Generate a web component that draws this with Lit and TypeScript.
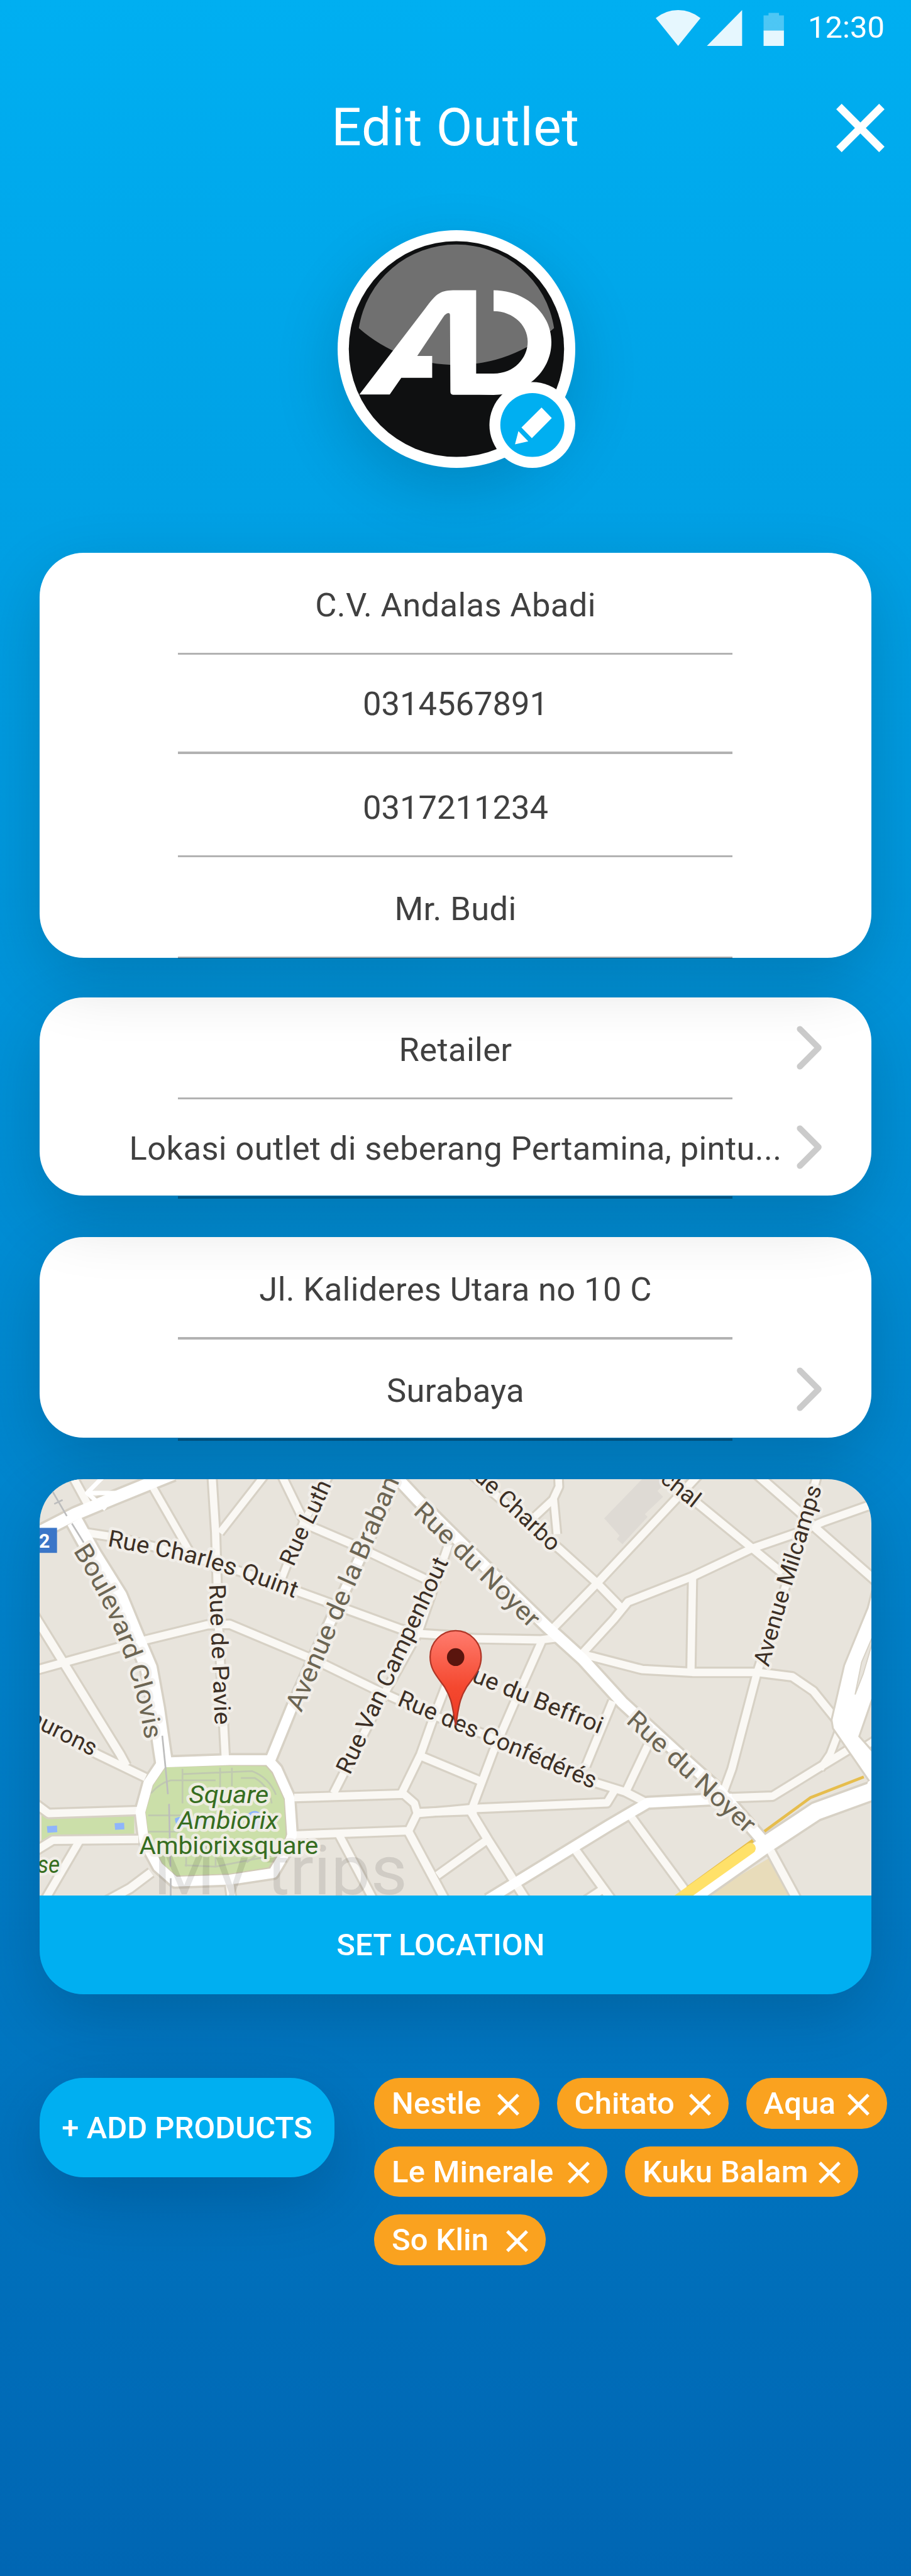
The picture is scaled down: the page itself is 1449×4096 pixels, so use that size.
import { LitElement, html, svg, css, unsafeCSS } from "lit";
import { customElement, property } from "lit/decorators.js";

/* Design units are 0.875 of a CSS pixel. */
const K = 0.875;
const u = (n: number) => unsafeCSS(`${+(n * K).toFixed(4)}px`);
const px = (n: number) => `${+(n * K).toFixed(4)}px`;

interface Field {
  text: string;
  height: number;
  top: number;
  more?: boolean;
  digits?: boolean;
}

const GROUPS: { name: string; fields: Field[] }[] = [
  {
    name: "contact",
    fields: [
      { text: "C.V. Andalas Abadi", height: 186, top: 59.5 },
      { text: "0314567891", height: 180, top: 53.5, digits: true },
      { text: "0317211234", height: 188, top: 61.5, digits: true },
      { text: "Mr. Budi", height: 184, top: 57.5 },
    ],
  },
  {
    name: "kind",
    fields: [
      { text: "Retailer", height: 186, top: 59.5, more: true },
      { text: "Lokasi outlet di seberang Pertamina, pintu...", height: 180, top: 53.5, more: true },
    ],
  },
  {
    name: "address",
    fields: [
      { text: "Jl. Kalideres Utara no 10 C", height: 186, top: 59 },
      { text: "Surabaya", height: 184, top: 57.5, more: true },
    ],
  },
];

const PRODUCTS = [
  [
    { name: "Nestle", width: 300, end: 36 },
    { name: "Chitato", width: 312, end: 32 },
    { name: "Aqua", width: 256, end: 32 },
  ],
  [
    { name: "Le Minerale", width: 424, end: 32 },
    { name: "Kuku Balam", width: 424, end: 32 },
  ],
  [{ name: "So Klin", width: 312, end: 32 }],
];

/* Streets: [path, width]. The eastern half of the map has its own origin. */
const EAST = 1529;
type Road = [string, number];

const MINOR_WEST: Road[] = [
  ["M178 40L245 160", 26],
  ["M215 238L330 255L600 320L860 400L1000 450L1350 575L1410 590L1580 600", 26],
  ["M677 40L690 240L700 560L725 1030", 26],
  ["M465 80L600 310", 24],
  ["M865 40L705 240", 24],
  ["M925 40L1010 210L1200 290L1440 402", 26],
  ["M1095 40L1000 210L925 400", 24],
  ["M1520 280L1410 590L1290 800L1110 1145", 26],
  ["M40 720L430 615L660 560L740 558L1050 685L1250 780L1340 820", 26],
  ["M40 520L350 1010L372 1050", 28],
  ["M40 890L270 1010L440 1090", 26],
  ["M40 1175L95 1215L415 1205", 26],
  ["M40 1350L110 1308L415 1305", 26],
  ["M205 1310L85 1510", 26],
  ["M300 1520L385 1475L460 1420", 28],
  ["M970 1160L1360 1148L1398 1180L1408 1215L1378 1275L970 1290", 26],
  ["M1408 1212L1620 1205", 26],
  ["M1515 760L1460 900L1420 1010L1350 1150", 26],
  ["M1420 1015L1530 1060L1640 1105", 26],
  ["M1130 1290L1255 1520", 26],
  ["M1375 1275L1510 1520", 28],
  ["M1480 1430L1530 1395L1655 1308", 26],
  ["M740 1460L748 1520", 28],
];

const MINOR_EAST: Road[] = [
  ["M-30 602L90 608L320 612L375 605", 26],
  ["M382 40L384 80L365 120L377 245", 24],
  ["M368 120L280 200", 24],
  ["M40 10L390 300L520 415L605 500", 26],
  ["M890 30L520 415L355 580", 26],
  ["M740 20L880 140L1070 292L1180 380", 26],
  ["M1080 30L1250 175L1300 225L1510 405", 28],
  ["M1510 138L1330 200L1240 238L1070 295L860 392L630 480L580 540L465 662L510 672L680 715L860 725L1090 725L1215 740L1290 790L1385 905", 26],
  ["M860 392L854 722", 26],
  ["M1310 20L1200 400L1090 725L1000 1060L970 1140", 26],
  ["M322 618L230 820L150 1000L75 1195", 26],
  ["M575 825L480 1050", 26],
  ["M700 980L622 1140", 26],
  ["M-190 820L0 900L120 940L520 1110L620 1140L700 1180", 26],
  ["M-120 1215L0 1205L75 1198L555 1178L582 1135", 26],
  ["M940 1162L1145 1155L1300 1062L1430 985", 26],
  ["M1385 920L1350 1010L1315 1060", 24],
  ["M640 1225L855 1510", 26],
  ["M445 1345L575 1520", 28],
  ["M68 1205L130 1305L270 1520", 28],
  ["M475 1520L545 1475", 26],
  ["M1138 1345L1235 1520", 28],
  ["M1430 1010L1510 960", 22],
];

const MAJOR_WEST: Road[] = [
  ["M30 255L190 175L330 118L540 35", 42],
  ["M187 200L255 320L345 460L400 590L452 710L478 850L500 1000L508 1050", 56],
  ["M1345 30L1170 400L1050 650L960 850L885 1030", 34],
  ["M500 1038L740 1030L878 1030L908 1062L953 1160L962 1290L945 1340L895 1422L740 1445L545 1452L485 1400L435 1310L422 1210L450 1110Z", 34],
];

const MAJOR_EAST: Road[] = [
  ["M-230 10L-120 125L30 270L340 565L470 680L610 830L800 1000L960 1140L1115 1315", 38],
  ["M1000 1163L700 1178L560 1258L130 1515", 34],
  ["M1520 1130L1300 1208L1110 1330L840 1515", 58],
];

interface Label {
  id: string;
  text: string;
  d: string;
  length: number;
  size: number;
  tone: string;
}

const LABELS: Label[] = [
  { id: "boulevard", text: "Boulevard Clovis", d: "M182 303Q302 490 365 668Q414 800 440 970", length: 710, size: 91, tone: "soft" },
  { id: "quint", text: "Rue Charles Quint", d: "M303 286Q440 312 560 335Q750 380 995 477", length: 694, size: 82, tone: "ink" },
  { id: "pavie", text: "Rue de Pavie", d: "M667 420L689 950", length: 488, size: 82, tone: "ink" },
  { id: "luth", text: "Rue Luth", d: "M968 360Q1010 260 1040 205Q1075 140 1130 10", length: 318, size: 82, tone: "ink" },
  { id: "braban", text: "Avenue de la Braban", d: "M995 866L1363 20", length: 880, size: 92, tone: "soft" },
  { id: "campenhout", text: "Rue Van Campenhout", d: "M1168 1084L1535 310", length: 822, size: 83, tone: "ink" },
  { id: "noyer-north", text: "Rue du Noyer", d: "M1391 171L1862 624", length: 582, size: 90, tone: "soft" },
  { id: "noyer-south", text: "Rue du Noyer", d: "M2149 898L2600 1307", length: 582, size: 90, tone: "soft" },
  { id: "charbo", text: "Rue Charbo", d: "M1570 15L1925 344", length: 432, size: 82, tone: "ink" },
  { id: "chal", text: "chal", d: "M2270 60L2420 180", length: 154, size: 82, tone: "ink" },
  { id: "milcamps", text: "Avenue Milcamps", d: "M2660 708Q2737 440 2757 380Q2802 240 2866 30", length: 652, size: 82, tone: "ink" },
  { id: "confederes", text: "Rue des Confédérés", d: "M1334 838L2080 1149", length: 758, size: 82, tone: "ink" },
  { id: "beffroi", text: "Rue du Beffroi", d: "M1550 736L2100 956", length: 546, size: 82, tone: "ink" },
  { id: "aurons", text: "aurons", d: "M20 902L290 1037", length: 258, size: 82, tone: "ink" },
];

const roads = (list: Road[], extra: number) =>
  list.map(([d, w]) => svg`<path d=${d} stroke-width=${w + extra} />`);

@customElement("area-map")
class AreaMap extends LitElement {
  static styles = css`
    :host { display: block; }
    .map { display: block; width: 100%; height: 100%; background: #e8e4dc; }
    .streets { fill: none; stroke-linejoin: round; }
    .edge { stroke: #d7d1c5; }
    .minor { stroke: #faf8f4; }
    .major { stroke: #fff; }
    .text { font-family: Roboto, "Liberation Sans", sans-serif; }
    .label {
      paint-order: stroke;
      stroke: rgba(243, 240, 235, 0.9);
      stroke-width: 20px;
      stroke-linejoin: round;
    }
    .ink { fill: #3c2f25; }
    .soft { fill: #6c6553; }
    .green { fill: #366d20; }
    .badge { fill: #fff; font-weight: 700; }
    .italic { font-style: italic; }
    .watermark { fill: rgba(0, 0, 0, 0.1); }
  `;

  render() {
    const east = `translate(${EAST} 0)`;
    return html`
      <svg class="map" viewBox="63 54 2963 1445" preserveAspectRatio="none">
        <defs>
          <linearGradient id="pin" x1="0" y1="0" x2="0" y2="1">
            <stop offset="0" stop-color="#ff7c6e" />
            <stop offset="0.6" stop-color="#f4482f" />
            <stop offset="1" stop-color="#ee3a24" />
          </linearGradient>
          ${LABELS.map((l) => svg`<path id=${l.id} d=${l.d} />`)}
        </defs>

        <path fill="#dedad4" d="M2209 54L2074 190L2129 250L2119 262L2139 280L2229 185L2219 175L2284 115L2264 95L2304 54Z" />
        <path fill="#e8dcba" d="M2659 1372L2439 1499L2734 1499Z" />
        <path fill="#cbdfa9" d="M70 1212L110 1232L400 1222L400 1290L120 1290L70 1310Z" />
        <g fill="#8fb5fb"><path d="M89 1259L125 1257L126 1280L91 1282Z" /><path d="M330 1249L364 1247L365 1270L332 1272Z" /></g>

        <g class="streets edge">
          ${roads(MINOR_WEST, 14)}${roads(MAJOR_WEST, 16)}
          <g transform=${east}>${roads(MINOR_EAST, 14)}${roads(MAJOR_EAST, 16)}</g>
        </g>
        <g class="streets minor">
          ${roads(MINOR_WEST, 0)}
          <g transform=${east}>${roads(MINOR_EAST, 0)}</g>
        </g>
        <path fill="#cbdfa9" stroke="#d0c9b6" stroke-width="6" d="M510 1052L740 1046L870 1048L893 1075L936 1165L943 1290L928 1335L880 1405L740 1427L550 1434L500 1392L450 1305L438 1210L466 1115Z" />
        <g fill="none" stroke="#c0c9b0" stroke-width="6">
          <path d="M572 1060V1180M706 1056V1180M748 1056V1120M460 1145Q490 1110 530 1100H690M575 1078L820 1068Q880 1090 905 1150M780 1092H830Q880 1120 890 1180M450 1222H570M450 1278H560M580 1395L690 1400L900 1360M585 1360V1400M690 1360V1400M875 1300Q860 1350 800 1385" />
        </g>
        <path fill="#8fb5fb" d="M545 1232Q575 1218 600 1235L665 1235V1255L575 1262Q545 1262 545 1232ZM800 1222Q825 1195 850 1215L855 1260Q835 1280 822 1262Z" />
        <g class="streets major">
          ${roads(MAJOR_WEST, 0)}
          <path stroke-width="15" d="M290 45L232 102H345M232 102L298 158" />
        </g>
        <g transform=${east}>
          <path fill="#fff" stroke="#d7d1c5" stroke-width="7" d="M1510 400L1484 500L1400 700L1355 890L1360 920L1490 1104L1520 1140L1520 1020L1454 947L1510 790Z" />
          <path fill="#e8e4dc" stroke="#d7d1c5" stroke-width="4" d="M1510 580L1462 690L1439 802L1468 730L1510 590Z" />
          <g class="streets major">${roads(MAJOR_EAST, 0)}</g>
          <path fill="#fff" d="M1485 1105L1510 1090V1165L1470 1150Z" />
          <g fill="none" stroke="#e6bd4d">
            <path stroke-width="10" d="M1470 1088L1280 1160L1116 1277" />
            <path stroke-width="12" d="M1075 1309L842 1474" />
            <path stroke="#ffe169" stroke-width="38" stroke-linecap="round" d="M1066 1336L800 1520" />
          </g>
        </g>
        <g fill="none" stroke="#bdbdbd" stroke-width="6">
          <path d="M108 95L160 182M115 140L145 126M178 208L220 274M500 945L512 1060L520 1148M524 1182L529 1400M530 1440V1510" />
        </g>

        <text class="text watermark" x="468" y="1496" font-size="240" textLength="905" lengthAdjust="spacingAndGlyphs">My trips</text>

        ${LABELS.map(
          (l) =>
            svg`<text class="text label ${l.tone}" font-size=${l.size} textLength=${l.length} lengthAdjust="spacingAndGlyphs"><textPath href="#${l.id}">${l.text}</textPath></text>`
        )}
        <text class="text label green italic" x="595" y="1178" font-size="84" textLength="284" lengthAdjust="spacingAndGlyphs">Square</text>
        <text class="text label green italic" x="555" y="1268" font-size="84" textLength="358" lengthAdjust="spacingAndGlyphs">Ambiorix</text>
        <text class="text label green" x="418" y="1356" font-size="84" textLength="638" lengthAdjust="spacingAndGlyphs">Ambiorixsquare</text>
        <text class="text label green italic" x="55" y="1422" font-size="84" textLength="80" lengthAdjust="spacingAndGlyphs">se</text>

        <rect x="60" y="223" width="65" height="87" fill="#3b76c8" />
        <text class="text badge" x="61" y="292" font-size="68">2</text>

        <path
          fill="url(#pin)"
          stroke="#b03627"
          stroke-width="5"
          stroke-linejoin="round"
          d="M1545 908L1540 882C1532 830 1526 808 1506 776C1478 738 1454 715 1454 671A91 91 0 0 1 1636 671C1636 715 1612 738 1584 776C1564 808 1558 830 1550 882Z"
        />
        <ellipse cx="1545" cy="672" rx="31" ry="31" fill="#5a150e" />
      </svg>
    `;
  }
}

@customElement("field-card")
class FieldCard extends LitElement {
  @property({ attribute: false }) fields: Field[] = [];

  static styles = css`
    :host { display: block; }
    .field {
      box-sizing: border-box;
      display: flex;
      flex-direction: column;
      align-items: center;
      justify-content: space-between;
    }
    .line {
      display: grid;
      width: 100%;
      align-items: center;
      justify-items: center;
    }
    .value {
      grid-area: 1 / 1;
      font-size: ${u(60)};
      line-height: ${u(72)};
      letter-spacing: 0.36px;
      white-space: nowrap;
      color: #404040;
    }
    .digits { letter-spacing: 0; }
    .chevron {
      grid-area: 1 / 1;
      justify-self: end;
      width: ${u(48)};
      height: ${u(80)};
      margin: ${u(-8)} ${u(88)} ${u(-1)} 0;
    }
    .rule {
      width: ${u(1008)};
      height: ${u(4)};
      margin-right: ${u(2)};
      background: rgba(0, 0, 0, 0.3);
    }
  `;

  render() {
    return this.fields.map(
      (f) => html`
        <div class="field" style="height:${px(f.height)};padding-top:${px(f.top)}">
          <div class="line">
            <span class="value ${f.digits ? "digits" : ""}">${f.text}</span>
            ${f.more
              ? html`<svg class="chevron" viewBox="0 0 48 80">
                  <path d="M6 6L40 40L6 74" fill="none" stroke="#cbcbcb" stroke-width="11" stroke-linecap="round" stroke-linejoin="round" />
                </svg>`
              : null}
          </div>
          <div class="rule"></div>
        </div>
      `
    );
  }
}

@customElement("app-root")
class AppRoot extends LitElement {
  static styles = css`
    :host {
      display: block;
      font-family: Roboto, "Liberation Sans", sans-serif;
      color: #fff;
    }
    .screen {
      display: flex;
      flex-direction: column;
      box-sizing: border-box;
      width: 1449px;
      height: 4096px;
      overflow: hidden;
      background: linear-gradient(180deg, #00aff1 0%, #0066b3 100%);
    }
    .status {
      display: flex;
      justify-content: flex-end;
      align-items: flex-start;
      height: ${u(100)};
      padding-right: ${u(48)};
      gap: ${u(42)};
    }
    .signals { width: ${u(234)}; height: ${u(65)}; margin-top: ${u(18)}; }
    .clock { margin-top: ${u(17)}; font-size: ${u(56)}; line-height: ${u(66)}; }
    .header {
      display: grid;
      align-items: center;
      height: ${u(265)};
      padding: 0 ${u(48)};
    }
    .title {
      grid-area: 1 / 1;
      margin: 0;
      text-align: center;
      font-weight: 400;
      font-size: ${u(96)};
      line-height: ${u(112)};
      letter-spacing: 0.65px;
    }
    .close { grid-area: 1 / 1; justify-self: end; width: ${u(88)}; height: ${u(88)}; }
    .avatar {
      align-self: center;
      width: ${u(432)};
      height: ${u(432)};
      margin: ${u(53)} 0 0 ${u(4)};
      border-radius: 50%;
      box-shadow: 0 ${u(40)} ${u(120)} rgba(0, 0, 0, 0.16);
    }
    .logo { display: block; width: 100%; height: 100%; }
    .stack {
      display: flex;
      flex-direction: column;
      margin: ${u(154)} ${u(72)} 0;
    }
    .card {
      position: relative;
      border-radius: ${u(80)};
      background: #fff;
      box-shadow: 0 ${u(40)} ${u(120)} rgba(0, 0, 0, 0.16);
    }
    .contact { height: ${u(736)}; z-index: 3; }
    .kind { height: ${u(360)}; margin-top: ${u(72)}; z-index: 2; }
    .address { height: ${u(364)}; margin-top: ${u(76)}; z-index: 1; }
    .place {
      position: relative;
      z-index: 4;
      margin-top: ${u(76)};
      border-radius: ${u(80)};
      overflow: hidden;
      box-shadow: 0 ${u(40)} ${u(120)} rgba(0, 0, 0, 0.16);
    }
    .area { height: ${u(756)}; }
    .action {
      box-sizing: border-box;
      display: block;
      height: ${u(180)};
      border: 0;
      background: #00aff1;
      color: #fff;
      font: 500 ${u(56)} / ${u(178)} Roboto, "Liberation Sans", sans-serif;
      text-align: center;
      white-space: nowrap;
    }
    .locate { width: 100%; padding: ${u(2)} ${u(54)} 0 0; }
    .products {
      display: flex;
      gap: ${u(72)};
      margin: ${u(152)} 0 0 ${u(72)};
    }
    .add {
      flex: none;
      width: ${u(536)};
      padding: ${u(2)} 0 0;
      border-radius: ${u(80)};
      box-shadow: 0 ${u(40)} ${u(120)} rgba(0, 0, 0, 0.16);
    }
    .chips { display: flex; flex-direction: column; gap: ${u(32)}; }
    .row { display: flex; gap: ${u(32)}; }
    .chip {
      box-sizing: border-box;
      display: flex;
      align-items: center;
      justify-content: space-between;
      height: ${u(92)};
      padding-left: ${u(32)};
      border-radius: ${u(46)};
      background: #faa21f;
      font-weight: 500;
      font-size: ${u(56)};
      line-height: ${u(90)};
      letter-spacing: 0.2px;
      white-space: nowrap;
    }
    .name { padding-top: ${u(3.5)}; }
    .remove { flex: none; width: ${u(40)}; height: ${u(40)}; margin-top: ${u(4)}; }
  `;

  private cross(name: string, size: number, stroke: number) {
    const a = stroke * 0.36;
    const b = size - a;
    return html`<svg class=${name} viewBox="0 0 ${size} ${size}">
      <path d="M${a} ${a}L${b} ${b}M${b} ${a}L${a} ${b}" fill="none" stroke="#fff" stroke-width=${stroke} />
    </svg>`;
  }

  render() {
    return html`
      <div class="screen">
        <div class="status">
          <svg class="signals" viewBox="1193 18 234 65">
            <g fill="#fff" fill-opacity="0.9">
              <path d="M1233.7 83L1193 32.7Q1211 18 1233.7 18T1274.4 32.7Z" />
              <path d="M1286 83L1350 18V83Z" />
              <path d="M1389 55H1426V83H1389Z" />
            </g>
            <path fill="#fff" fill-opacity="0.3" d="M1389 27.7H1398V23H1417V27.7H1426V55H1389Z" />
          </svg>
          <span class="clock">12:30</span>
        </div>

        <div class="header">
          <h1 class="title">Edit Outlet</h1>
          ${this.cross("close", 88, 14)}
        </div>

        <div class="avatar">
          <svg class="logo" viewBox="157 114 1254 1296" preserveAspectRatio="none">
            <ellipse cx="784" cy="762" rx="627" ry="648" fill="#fff" />
            <ellipse cx="784" cy="762" rx="568" ry="588" fill="#0f1011" />
            <path fill="#707070" d="M269 648A520 537 0 0 1 784 192A520 537 0 0 1 1299 648A779 805 0 0 1 269 648Z" />
            <path fill="#fff" d="M272 1010L620 540C680 455 700 441 780 441H888V896H980C1090 896 1160 810 1160 722C1160 630 1080 555 980 555V441C1140 441 1285 560 1285 725C1285 890 1140 1012 980 1012L766 1011Q752 1009 752 993L750 575Q749 560 732 569Q722 574 714 588L577 800H656V919H493L432 1010Z" />
            <ellipse cx="1184.5" cy="1176" rx="226.5" ry="234" fill="#fff" />
            <ellipse cx="1184.5" cy="1176" rx="169" ry="174" fill="#00aff1" />
            <path fill="#fff" d="M1233 1081L1287 1138L1182 1248L1127 1190ZM1111 1209L1163 1265L1093 1281Z" />
          </svg>
        </div>

        <div class="stack">
          ${GROUPS.map((g) => html`<field-card class="card ${g.name}" .fields=${g.fields}></field-card>`)}
          <div class="place">
            <area-map class="area"></area-map>
            <button class="action locate">SET LOCATION</button>
          </div>
        </div>

        <div class="products">
          <button class="action add">+ ADD PRODUCTS</button>
          <div class="chips">
            ${PRODUCTS.map(
              (row) => html`<div class="row">
                ${row.map(
                  (p) => html`<div class="chip" style="width:${px(p.width)};padding-right:${px(p.end)}">
                    <span class="name">${p.name}</span>${this.cross("remove", 40, 6)}
                  </div>`
                )}
              </div>`
            )}
          </div>
        </div>
      </div>
    `;
  }
}
